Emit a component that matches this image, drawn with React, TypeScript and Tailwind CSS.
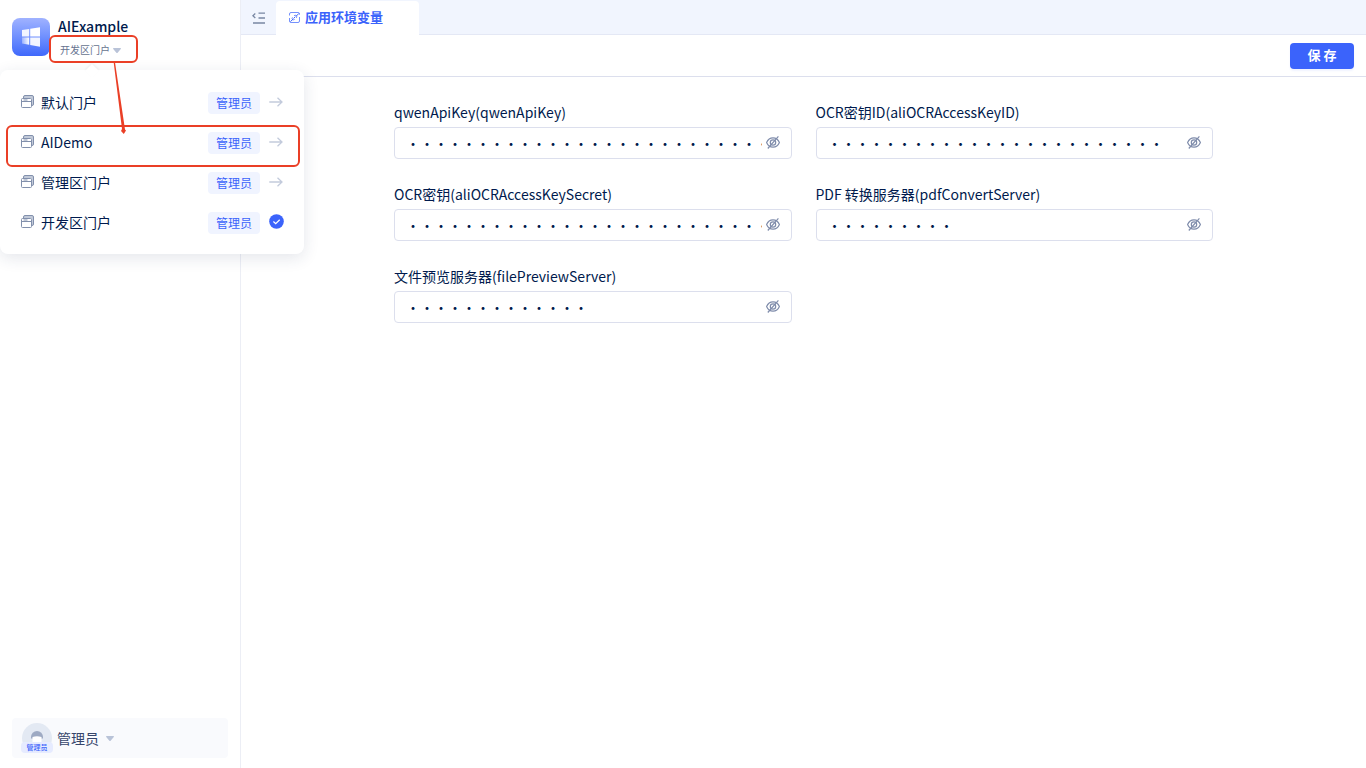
import { useState } from "react";

type Portal = { name: string; role: string };

const portals: Portal[] = [
  { name: "默认门户", role: "管理员" },
  { name: "AIDemo", role: "管理员" },
  { name: "管理区门户", role: "管理员" },
  { name: "开发区门户", role: "管理员" },
];

const fields = [
  { id: "qwenApiKey", label: "qwenApiKey(qwenApiKey)", value: "sk-000000000000000000000000000000000" },
  { id: "aliOCRAccessKeyID", label: "OCR密钥ID(aliOCRAccessKeyID)", value: "LTAI00000000000000000000" },
  { id: "aliOCRAccessKeySecret", label: "OCR密钥(aliOCRAccessKeySecret)", value: "000000000000000000000000000000" },
  { id: "pdfConvertServer", label: "PDF 转换服务器(pdfConvertServer)", value: "127.0.0.1" },
  { id: "filePreviewServer", label: "文件预览服务器(filePreviewServer)", value: "192.168.100.1" },
];

function Caret() {
  return (
    <svg width="8" height="5" viewBox="0 0 8 5" className="shrink-0 fill-[#b9c3d8]" aria-hidden="true">
      <path d="M.6 0h6.8c.5 0 .7.5.4.9L4.6 4.7c-.3.4-.9.4-1.2 0L.2.9C-.1.5.1 0 .6 0z" />
    </svg>
  );
}

function Logo() {
  return (
    <span className="flex size-[38px] shrink-0 items-center justify-center rounded-lg bg-linear-to-b from-[#a0b2ff] to-[#4068fb]">
      <svg width="20" height="20" viewBox="0 0 20 20" aria-hidden="true">
        <defs>
          <linearGradient id="pane" x1="0" x2="1" y1="0" y2="0">
            <stop offset="0" stopColor="#fff" stopOpacity=".35" />
            <stop offset="1" stopColor="#fff" />
          </linearGradient>
        </defs>
        <path d="M1 3 8.2 2v7.4H1z" fill="#fff" fillOpacity=".9" />
        <path d="M9.2 1.8 19 .3v9.1H9.2z" fill="#fff" />
        <path d="M1 10.4h7.2v7.4L1 16.6z" fill="url(#pane)" />
        <path d="M9.2 10.4H19v9.3l-9.8-1.6z" fill="#fff" fillOpacity=".92" />
      </svg>
    </span>
  );
}

function PortalIcon() {
  return (
    <svg width="13" height="13" viewBox="0 0 13 13" fill="none" className="shrink-0 stroke-[#8290ac]" aria-hidden="true">
      <path d="M3 .5h8q1.500 0 1.500 1.500v7.500q0 1-1 1h-1.200V3.500H2.500V2z" fill="#c2cad9" stroke="none" />
      <path d="M2.500 3.500V2q0-1.500 1.500-1.500h7q1.500 0 1.500 1.500v7q0 1.500-1.500 1.500h-.5" />
      <path d="M.5 4.500q0-1 1-1h8q1 0 1 1v7q0 1-1 1h-8q-1 0-1-1z" fill="#fff" />
      <path d="M.5 6.500h10M2.500 5h4" />
    </svg>
  );
}

function ArrowIcon() {
  return (
    <svg width="14" height="10" viewBox="0 0 14 10" fill="none" className="stroke-[#c3cbdc]" strokeWidth="1.300" aria-hidden="true">
      <path d="M.3 5h12.500M8.500.7 13 5 8.500 9.300" />
    </svg>
  );
}

function CheckIcon() {
  return (
    <svg width="15" height="15" viewBox="0 0 15 15" aria-hidden="true">
      <circle cx="7.500" cy="7.500" r="7.300" fill="#3b63fb" />
      <path d="m4.400 7.500 2.300 2.200 4-3.900" fill="none" stroke="#fff" strokeWidth="1.200" />
    </svg>
  );
}

function EyeOffIcon() {
  return (
    <svg width="14" height="13" viewBox="0 0 14 13" fill="none" className="stroke-[#7f8cab]" strokeWidth="1.200" aria-hidden="true">
      <path d="M.6 6.500C2 3.200 4.300 1.800 7 1.800s5 1.400 6.400 4.700C12 9.800 9.700 11.200 7 11.200S2 9.800.6 6.500z" />
      <ellipse cx="7" cy="6.500" rx="2.700" ry="2.700" />
      <path d="M1.800 12.500 12.400.4" />
    </svg>
  );
}

function TabIcon() {
  return (
    <svg width="11" height="11" viewBox="0 0 11 11" fill="none" className="shrink-0 stroke-[#3b63fb]" aria-hidden="true">
      <path d="M.5 3.500V2q0-1.500 1.500-1.500h7q1.500 0 1.500 1.500v.7M.5 6v3q0 1.500 1.500 1.500h7q1.500 0 1.500-1.500V5" strokeOpacity=".7" />
      <path d="M9.800 1.500 7 4.300M6.200 4.800 4.500 6.500M4 7.200 1.500 9.500" />
      <path d="M5 3.700q1.300-1 2.300 0t0 2.200M3.500 5.300q-1 1.200 0 2.100t2.200 0" strokeOpacity=".7" />
    </svg>
  );
}

function CollapseIcon() {
  return (
    <svg width="13" height="12" viewBox="0 0 13 12" fill="none" className="stroke-[#7887a3]" strokeWidth="1.300" aria-hidden="true">
      <path d="M3.300 1.500.9 3.700l2.400 2.200M6.500 1.200H13M6.500 6H13M1 11h12" />
    </svg>
  );
}

function PortalMenu({ current, onSelect }: { current: string; onSelect: (name: string) => void }) {
  return (
    <div className="absolute top-[70px] left-0 z-10 w-[304px] rounded-lg bg-white py-3 shadow-[0_4px_16px_rgba(30,50,90,0.12)]">
      <span className="absolute -top-1 left-[87px] size-[10px] rotate-45 bg-white shadow-[-1px_-1px_2px_rgba(30,50,90,0.06)]" />
      <ul className="relative">
        {portals.map((p) => (
          <li key={p.name}>
            <button
              type="button"
              onClick={() => onSelect(p.name)}
              className="flex h-10 w-full items-center pr-5 pb-px pl-[21px] text-left"
            >
              <PortalIcon />
              <span className="ml-[7px] flex-1">{p.name}</span>
              <span className="mt-[3px] h-[22px] rounded bg-[#f0f4ff] px-2 text-xs leading-[22px] text-[#3b63fb]">{p.role}</span>
              <span className="ml-2 flex w-4 justify-center">{p.name === current ? <CheckIcon /> : <ArrowIcon />}</span>
            </button>
          </li>
        ))}
      </ul>
    </div>
  );
}

function Annotations() {
  return (
    <svg width="304" height="170" viewBox="0 0 304 170" fill="none" className="pointer-events-none absolute top-0 left-0 z-20 stroke-[#ea3f26]" strokeWidth="2" aria-hidden="true">
      <rect x="50" y="36" width="87" height="26" rx="5" />
      <rect x="7" y="126" width="292" height="40" rx="5" />
      <path d="M113.500 61 114.800 61 125 129.500 126 130.500 123.800 134 121 131 122 129z" fill="#ea3f26" stroke="none" />
    </svg>
  );
}

function SecretField({ id, label, value }: { id: string; label: string; value: string }) {
  const [visible, setVisible] = useState(false);
  const [text, setText] = useState(value);
  return (
    <div>
      <label htmlFor={id} className="block leading-[22px]">
        {label}
      </label>
      <div className="mt-1 flex h-8 items-center rounded border border-[#dcdfed] px-[11px] pb-px">
        <input
          id={id}
          type={visible ? "text" : "password"}
          value={text}
          onChange={(e) => setText(e.target.value)}
          className="h-full min-w-0 flex-1 bg-transparent outline-none"
        />
        <button type="button" aria-label="显示或隐藏" onClick={() => setVisible(!visible)} className="ml-1">
          <EyeOffIcon />
        </button>
      </div>
    </div>
  );
}

export default function App() {
  const [current, setCurrent] = useState("开发区门户");
  return (
    <div className="relative flex min-h-screen bg-white font-['Noto_Sans_CJK_SC',sans-serif] text-sm text-[#001a4d]">
      <aside className="flex w-[241px] shrink-0 flex-col border-r border-[#eceef5] px-3 pt-[18px] pb-[10px]">
        <div className="flex gap-2">
          <Logo />
          <div>
            <h1 className="h-[18px] leading-4 font-medium">AIExample</h1>
            <button type="button" aria-haspopup="menu" aria-expanded="true" className="mt-1 ml-0.5 flex items-center gap-[3px] text-[10px] leading-5 text-[#66738f]">
              {current}
              <Caret />
            </button>
          </div>
        </div>
        <button type="button" className="mt-auto flex h-10 items-center rounded bg-[#f9fafd] pl-[9px] text-[#36456b]">
          <span className="relative flex h-[30px] w-8 items-center justify-center">
            <span className="flex size-[30px] items-center justify-center rounded-full bg-[#e3e9f3]">
              <svg width="14" height="13" viewBox="0 0 14 13" className="mb-1" aria-hidden="true">
                <path d="M1 8.500V7a6 6 0 0 1 12 0v1.500z" fill="#9eaac3" />
                <path d="M2.500 7q4.500-1.500 9 0v5h-9z" fill="#fff" />
              </svg>
            </span>
            <span className="absolute bottom-0 left-0 h-[11px] w-8 rounded bg-[#e6ebff] text-center text-[7px] leading-[11px] font-medium text-[#3b63fb]">管理员</span>
          </span>
          <span className="mr-[7px] ml-1">管理员</span>
          <Caret />
        </button>
      </aside>

      <main className="min-w-0 flex-1">
        <div className="flex h-[35px] border-b border-[#e4e8f5] bg-[#f1f5fe]">
          <button type="button" aria-label="收起菜单" className="flex w-[34px] items-center justify-center pt-px">
            <CollapseIcon />
          </button>
          <a href="#env" className="mt-px -mb-px ml-px flex w-[143px] items-center gap-[5px] rounded-t bg-white pb-0.5 pl-[13px] text-[13px] font-bold text-[#3b63fb]">
            <TabIcon />
            应用环境变量
          </a>
        </div>
        <div className="flex h-[42px] items-center justify-end border-b border-[#dcdfed] px-3">
          <button type="button" className="h-[26px] w-16 rounded bg-[#3b63fb] text-[13px] font-bold text-white shadow-[0_2px_2px_rgba(59,99,251,0.08)]">
            保 存
          </button>
        </div>
        <form className="mx-auto mt-6 grid max-w-[819px] grid-cols-2 gap-6">
          {fields.map((f) => (
            <SecretField key={f.id} {...f} />
          ))}
        </form>
      </main>

      <PortalMenu current={current} onSelect={setCurrent} />
      <Annotations />
    </div>
  );
}
